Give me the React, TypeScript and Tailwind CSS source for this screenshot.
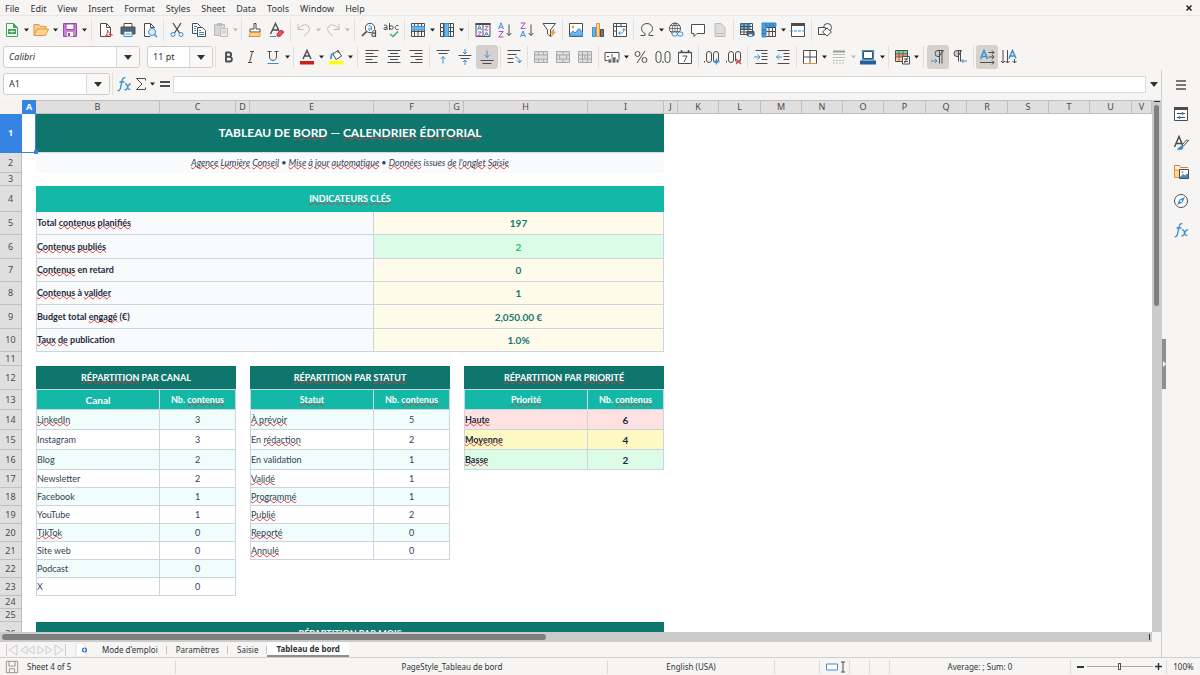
import { ReactNode } from "react";

const G = "#4d4d4d";
const B = "#3a8fd0";
const P = "#b145c4";
const L = "#bcbcbc";

const Svg = ({ children }: { children: ReactNode }) => (
  <svg className="h-4 w-4 shrink-0" viewBox="0 0 16 16" fill="none" stroke={G} strokeWidth="1">
    {children}
  </svg>
);

const gridLines = (
  <path d="M1.5 1.5h13v13h-13zM1.5 5.5h13M1.5 9.5h13M4.5 1.5v13M8 1.5v13M11.5 1.5v13" />
);

/** Icons of both toolbars and the sidebar */
const icons: Record<string, ReactNode> = {
  new: (
    <>
      <path d="M2.5 1.5h7l4 4v9h-11z" stroke="#3fa75a" fill="#fff" />
      <path d="M9.5 1.5v4h4z" fill="#3fa75a" stroke="#3fa75a" />
      <path d="M4 7h8v5H4z" fill="#3fa75a" stroke="none" />
      <path d="M5 9.500h6M8 8v3" stroke="#fff" strokeWidth=".7" />
    </>
  ),
  open: (
    <>
      <path d="M1 13V2.500h5l1.500 2H13v3" fill="#f7ce8b" stroke="#e3973d" />
      <path d="M1 13.500 4 7h11.500l-3 6.500z" fill="#fcd794" stroke="#e3973d" />
    </>
  ),
  save: (
    <>
      <path d="M1.500 1.500h13v13h-13z" fill="#c684d4" stroke="#9b45ad" />
      <path d="M4 2h8v5.500H4z" fill="#fff" stroke="#9b45ad" />
      <path d="M5 10h6v4.500H5z" fill="#fff" stroke="none" />
      <path d="M6 11h2v3H6z" fill="#9b45ad" stroke="none" />
    </>
  ),
  pdf: (
    <>
      <path d="M2.500 1.500h6l4 4v9h-10zM8.500 1.500v4h4" fill="#fff" />
      <path d="M7 14.500c2-2 3-4 2.500-6.500 1 3 3 4.500 5 5-3-.8-5 0-7.500 1.500z" stroke="#d8434e" />
    </>
  ),
  print: (
    <>
      <path d="M4 5V1.500h8V5" fill="#fff" />
      <path d="M1 5h14v7H1z" fill="#5b6166" stroke="#4d4d4d" />
      <path d="M4 9.500h8v5H4z" fill="#fff" stroke={B} />
      <path d="M5.500 12h5" stroke={B} />
    </>
  ),
  preview: (
    <>
      <path d="M12.500 6V5.500l-4-4h-6v13H8M8.500 1.500v4h4" fill="#fff" />
      <circle cx="10" cy="10" r="3.500" stroke={B} fill="#d9ecfa" />
      <path d="m12.500 12.500 2.500 2.500" stroke={B} strokeWidth="1.500" />
    </>
  ),
  cut: (
    <>
      <path d="M4 1l6.500 10M12 1 5.500 11" strokeWidth="1.300" />
      <circle cx="4" cy="12.500" r="2" stroke={B} />
      <circle cx="12" cy="12.500" r="2" stroke={B} />
    </>
  ),
  copy: (
    <>
      <path d="M1.500 1.500h5l3 3v7h-8z" fill="#fff" />
      <path d="M6.500 5.500h5l3 3v6h-8z" fill="#fff" />
      <path d="M3 4.500h3M3 6.500h2M3 8.500h2M8 8.500h2M8 10.500h5M8 12.500h5" stroke={B} />
    </>
  ),
  paste: (
    <>
      <path d="M1.500 2.500h10v11h-10z" fill="#d6d6d6" stroke={L} />
      <path d="M4 1h5v3H4z" fill={L} stroke="none" />
      <path d="M7.500 6.500h7v8h-7zM9 9h4M9 11h4" fill="#eee" stroke={L} />
    </>
  ),
  clone: (
    <>
      <path d="M7 1.500h2V7h4v3H3V7h4z" fill="#fff" />
      <path d="M3 10.500h10v4H2z" fill="#fbd28f" stroke="#e0923c" />
    </>
  ),
  clear: (
    <>
      <path d="M1.500 12 6.500 1.500 10.500 10M3.500 8h6" strokeWidth="1.400" />
      <path d="M1 14.500h6" stroke={B} />
      <path d="m8 12 4-4 3 2-4 4.500-3-.5z" fill="#e4505b" stroke="#c9303c" />
    </>
  ),
  undo: <path d="M2 2v5.500h5.500M2.500 7C5 3 9 1.500 12 4c3 3 1 6.500-4 10" stroke={L} />,
  redo: <path d="M14 2v5.500H8.500M13.500 7C11 3 7 1.500 4 4c-3 3-1 6.500 4 10" stroke={L} />,
  find: (
    <>
      <circle cx="9" cy="6" r="4.700" fill="#fff" />
      <path d="M5.500 9.500 1 14" strokeWidth="1.700" />
      <path d="M7.500 4.300c1-.7 3-.6 3 .9v3M10.500 6.200c-2-.2-3.200.2-3.200 1.200s2.200 1.200 3.200-.2" stroke={B} />
      <path d="M14.500 8v7" strokeWidth="1.200" />
      <circle cx="12.700" cy="12.700" r="1.800" fill="#f6f5f4" strokeWidth="1.200" />
    </>
  ),
  spell: (
    <>
      <path d="M1 3.500c1-.8 3-.6 3 .9v3.400M4 5.500C2 5.300.8 5.800.8 6.700S3 8.200 4 6.700M6.500 1v7M15.500 3.800c-1.800-1-3.300 0-3.300 1.700s1.500 2.800 3.300 1.800" />
      <circle cx="8.300" cy="5.500" r="1.800" />
      <path d="m7 12 3 2.500L15 9.500" stroke="#3fae5d" strokeWidth="1.400" />
    </>
  ),
  row: (
    <>
      {gridLines}
      <path d="M1.500 4.500h13v3.500h-13z" fill="#6db5ea" stroke={B} />
    </>
  ),
  col: (
    <>
      {gridLines}
      <path d="M5.500 1.500h4v13h-4z" fill="#6db5ea" stroke={B} />
    </>
  ),
  sort: (
    <>
      <path d="M1 1.500h14v13H1zM8 1.500v13" fill="#fff" />
      <path d="M.5 2h15" strokeWidth="2" />
      <path d="m2.500 8 2-4.500 2 4.500M3.200 6.700h2.600M9.500 13.800l2-4 2 4M10.200 12.600h2.600" stroke={B} />
      <path d="M2.700 10h3.600l-3.600 3.700h3.600M9.700 4.300h3.600L9.700 8h3.600" stroke={P} />
    </>
  ),
  asc: (
    <>
      <path d="M1.500 7 4 .8 6.500 7M2.300 5.200h3.400" stroke={B} />
      <path d="M1.800 9.500h4.400l-4.400 5.500h4.600" stroke={P} />
      <path d="M12 2.500v11M9.500 11l2.500 2.500 2.500-2.500" />
    </>
  ),
  desc: (
    <>
      <path d="M1.800 1h4.400L1.800 6.500h4.600" stroke={P} />
      <path d="M1.500 15.200 4 9l2.500 6.200M2.300 13.400h3.400" stroke={B} />
      <path d="M12 2.500v11M9.500 11l2.500 2.500 2.500-2.500" />
    </>
  ),
  filter: (
    <>
      <path d="M2 1.500h12.500L9.500 8v6.500L6.500 12V8z" fill="#fff" />
      <path d="M13 7 9.500 11h2l-1.500 4 4.500-5h-2z" fill="#f3a54a" stroke="#e0923c" strokeWidth=".6" />
    </>
  ),
  image: (
    <>
      <path d="M1.500 1.500h13v13h-13z" fill="#fff" />
      <path d="m2 12 3-3 2 2 4-4.500 3.500 3.500v4H2z" fill="#6db5ea" stroke={B} />
      <circle cx="5" cy="5" r="1.500" fill="#f3a54a" stroke="none" />
    </>
  ),
  chart: (
    <>
      <path d="M2.500 5.500h3v9h-3z" fill="#6db5ea" stroke={B} />
      <path d="M6.500 1.500h3v13h-3z" fill="#fbd28f" stroke="#e0923c" />
      <path d="M10.500 7.500h3v7h-3z" fill="#777" />
    </>
  ),
  pivot: (
    <>
      <path d="M1.500 1.500h13v13h-13zM4.500 1.500v13M1.500 4.500h13M1.500 9h3M9 1.500v3" fill="#fff" />
      <path d="M7 11c4 .5 5-1 5-4M10.500 8.500 12 6.500l1.500 2M8.500 9.500 6.500 11l2 2" stroke={B} />
    </>
  ),
  omega: <path d="M1.500 13.500H6v-2C3.500 10 2.500 8.500 2.500 6.500a5.500 5 0 0 1 11 0c0 2-1 3.500-3.500 5v2h4.500" />,
  link: (
    <>
      <circle cx="7" cy="6.500" r="5.500" fill="#fff" />
      <path d="M1.500 6.500h11M7 1v11M3 3.500h8M3 9.500h8M7 1C3.500 4 3.500 9 7 12M7 1c3.500 3 3.500 8 0 11" strokeWidth=".7" />
      <rect x="4" y="10" width="5.500" height="4" rx="2" stroke={B} fill="#f6f5f4" />
      <rect x="9.500" y="10" width="5.500" height="4" rx="2" stroke={B} fill="#f6f5f4" />
    </>
  ),
  comment: <path d="M1.500 2.500h13v9H7l-3 3v-3H1.500z" fill="#fff" />,
  headers: (
    <>
      <path d="M3 1.500h6l4 4v9H3z" fill="#ddd" stroke={L} />
      <path d="M4.500 11.500h7" stroke={L} />
    </>
  ),
  area: (
    <>
      <path d="M1.500 1.500h12v11h-12z" fill="#fff" />
      <path d="M2 2h9v5H2z" fill="#6db5ea" stroke={B} />
      <path d="M1.500 4.500h12M1.500 7.500h12M1.500 10h12M5 1.500v11M9 1.500v11" />
      <path d="M8 9.500h7v4H8z" fill="#5b6166" />
      <path d="M9.500 12h4v2.500h-4z" fill="#fff" stroke={B} />
    </>
  ),
  freeze: (
    <>
      {gridLines}
      <path d="M1 1h14v3.500H5V15H1z" fill="#4aa0de" stroke={B} />
      <path d="M5 1v3M9 1v3M12 1v3M1 8h4M1 11.500h4" stroke="#1f6fae" />
    </>
  ),
  split: (
    <>
      <path d="M1.500 1.500h13v13h-13z" fill="#fff" />
      <path d="M1 2.500h14" strokeWidth="3" />
      <path d="M0 9h16" stroke={B} strokeDasharray="3 1" />
    </>
  ),
  shapes: (
    <>
      <circle cx="10.500" cy="5.500" r="4" />
      <path d="M1.500 5.500h7v7h-7z" fill="#f6f5f4" />
      <path d="m10 6 4.500 4L10 14l-4.500-4z" fill="#fff" />
    </>
  ),
  bold: <path d="M5 3.500v9M4.500 3.500H8a2 2 0 0 1 0 4.300H5h3.500a2.300 2.300 0 0 1 0 4.700h-4" strokeWidth="1.900" />,
  italic: <path d="M7 2.500h4M5 13.500h4M9.500 2.500l-3 11" />,
  underline: (
    <>
      <path d="M2.500 2.500h4M9.500 2.500h4M4.500 2.500V8c0 4.500 7 4.500 7 0V2.500" />
      <path d="M2.500 14.500h11" stroke={B} />
    </>
  ),
  color: (
    <>
      <path d="M4 10 8 1.500 12 10M5.500 7h5" strokeWidth="1.500" />
      <path d="M1 12h14v3.500H1z" fill="#c9211e" stroke="none" />
    </>
  ),
  highlight: (
    <>
      <path d="m5 5 5-3.500 3.500 5.500L8 10.500z" fill="#fff" />
      <path d="M10 1v3" />
      <path d="M3 10c0-3 0-5 3-6" stroke={B} strokeWidth="1.700" />
      <path d="M1 12h14v3.500H1z" fill="#ff0" stroke="none" />
    </>
  ),
  left: <path d="M1.500 1.500h13M1.500 4.500h8M1.500 7.500h12M1.500 10.500h7M1.500 13.500h12" />,
  center: <path d="M1.500 1.500h13M4 4.500h8M2 7.500h12M4 10.500h8M1.500 13.500h13" />,
  right: <path d="M1.500 1.500h13M6.500 4.500h8M2.500 7.500h12M7.500 10.500h7M2.500 13.500h12" />,
  top: (
    <>
      <path d="M1.500 1.500h13M3.500 4.500h9" />
      <path d="M8 14.500V7.500M5.500 10 8 7.500l2.500 2.500" stroke={B} />
    </>
  ),
  middle: (
    <>
      <path d="M1.500 6.500h13M3.500 9.500h9" />
      <path d="M8 0v5M6 3l2 2 2-2M8 16v-5M6 13l2-2 2 2" stroke={B} />
    </>
  ),
  bottom: (
    <>
      <path d="M1.500 11.500h13M3.500 14.500h9" />
      <path d="M8 1.500v7M5.500 6 8 8.500 10.500 6" stroke={B} />
    </>
  ),
  wrap: (
    <>
      <path d="M1.500 1.500h13M1.500 5.500h9M1.500 9.500h6M1.500 13.500h6" />
      <path d="M9 8c3 0 4.500 2 4.500 5.500M11 11.500l2.500 2.500 2-3" stroke={B} />
    </>
  ),
  merge1: <path d="M1.500 2.500h13v11h-13zM1.500 6h13v4h-13M5.500 2.500v3.500M10.500 2.500V6M5.500 10v3.500M10.500 10v3.500" fill="#ddd" stroke="#a9a9a9" />,
  merge2: <path d="M1.500 2.500h13v11h-13zM1.500 6h13v4h-13M8 2.500V6M8 10v3.500M4.500 6v4M11.500 6v4" fill="#ddd" stroke="#a9a9a9" />,
  merge3: <path d="M1.500 2.500h13v11h-13zM1.500 6h13v4h-13M5.500 2.500v11M10.500 2.500v11M8 6v4" fill="#ddd" stroke="#a9a9a9" />,
  currency: (
    <>
      <path d="M1 3.500h14v8H1z" fill="#fff" />
      <path d="M8 5v5M3 7.500h2" />
      <path d="M4 10h4v4H4zM8 8h4v6H8zM12 10h3v4h-3z" fill="#666" stroke="#f6f5f4" strokeWidth=".7" />
    </>
  ),
  percent: (
    <>
      <circle cx="4.500" cy="5" r="2.500" />
      <circle cx="11.500" cy="11" r="2.500" />
      <path d="m12 2-8 12" />
    </>
  ),
  number: (
    <>
      <rect x="1" y="2.500" width="5" height="11" rx="2.500" />
      <rect x="10" y="2.500" width="5" height="11" rx="2.500" />
      <path d="M8 12v2" />
    </>
  ),
  date: (
    <>
      <path d="M1.500 3.500h13v11h-13z" fill="#fff" />
      <path d="M1.500 3.500h13M4.500 1v3M11.500 1v3" strokeWidth="1.500" />
      <path d="M5.500 7h4.500l-3 6" />
    </>
  ),
  addDec: (
    <>
      <path d="M.5 12v1.500" />
      <rect x="2.500" y="2.500" width="5" height="11" rx="2.500" />
      <rect x="9.500" y="2.500" width="5" height="11" rx="2.500" />
      <path d="M12.500 9.500v6M9.500 12.500h6" stroke={B} strokeWidth="1.300" />
    </>
  ),
  delDec: (
    <>
      <path d="M.5 12v1.500" />
      <rect x="2.500" y="2.500" width="5" height="11" rx="2.500" />
      <rect x="9.500" y="2.500" width="5" height="11" rx="2.500" />
      <path d="m10 10 5 5M15 10l-5 5" stroke="#e0434e" strokeWidth="1.200" />
    </>
  ),
  indent: (
    <>
      <path d="M2.500 1.500h12M8.500 4.500h6M8.500 7.500h6M8.500 10.500h6M2.500 14.500h12" />
      <path d="M1 8h5.500M4.500 5.500 7 8l-2.500 2.500" stroke={B} />
    </>
  ),
  outdent: (
    <>
      <path d="M2.500 1.500h12M8.500 4.500h6M8.500 7.500h6M8.500 10.500h6M2.500 14.500h12" />
      <path d="M7 8H1.500M4 5.500 1.500 8 4 10.500" stroke={B} />
    </>
  ),
  borders: (
    <>
      <path d="M1.500 1.500h13v13h-13zM8 1.500v13M1.500 8h13" fill="#fff" />
      <path d="M1.500 14.500h13" stroke="#e0923c" />
    </>
  ),
  lineStyle: (
    <>
      <path d="M2 2.500h12" stroke="#999" strokeWidth="2" />
      <path d="M2 5.500h12M2 8.500h12" stroke={L} />
      <path d="M2 11.500h12M2 14h12" stroke={L} strokeDasharray="2 1" />
    </>
  ),
  lineColor: (
    <>
      <path d="M2.500 1.500h11v9h-11z" fill="#fff" stroke={B} strokeWidth="1.200" />
      <path d="M3.500 2.500h9v7h-9z" />
      <path d="M0 11.500h16v4H0z" fill="#1f5f9e" stroke="none" />
    </>
  ),
  conditional: (
    <>
      <path d="M1.500 1.500h12v11h-12z" fill="#fff" />
      <path d="M2 2h11v3H2z" fill="#7fd494" stroke="none" />
      <path d="M2 5h11v3H2z" fill="#ef8b8b" stroke="none" />
      <path d="M2 8h6v4H2z" fill="#fbd28f" stroke="none" />
      <path d="M1.500 4.800h12M1.500 8h12M5 1.500v11M9 1.500v11" strokeWidth=".7" />
      <path d="M8.500 7.500h7v7.500h-7zM10 10h4M10 12.500h4M13.500 8.500 10.500 14" fill="#fff" />
    </>
  ),
  ltr: (
    <>
      <path d="M13.500 1.500H8a3 3 0 0 0 0 6h1zM9.500 1.500v13M12 1.500v13" fill="#ccc" />
      <path d="M1 12h6M5 10l2 2-2 2" stroke={B} />
    </>
  ),
  rtl: (
    <>
      <path d="M9.500 1.500H5a3 3 0 0 0 0 6h1zM6.500 1.500v11M8.500 1.500v11" fill="#ccc" />
      <path d="M15 12H9.500M11.500 10l-2 2 2 2" stroke={B} />
    </>
  ),
  horizontal: (
    <>
      <path d="M1.500 10 5 1.500 8.500 10M3 7.500h4" stroke={B} strokeWidth="1.500" />
      <path d="M9.500 3.500H15M9.500 8H15M1 13.500h14M13 1.500l2 2-2 2M13 6l2 2-2 2M13 11.500l2 2-2 2" />
    </>
  ),
  vertical: (
    <>
      <path d="M8 9.500 11.500 1.500 15 9.500M9.500 7h4" stroke={B} strokeWidth="1.500" />
      <path d="M2 1v13M6.500 1v13M13.500 10v4M0 12l2 2 2-2M4.500 12l2 2 2-2M11.500 12l2 2 2-2" />
    </>
  ),
  menu: <path d="M3 4h10M3 8h10M3 12h10" strokeWidth="1.600" />,
  properties: (
    <>
      <path d="M1.500 1.500h13v13h-13z" fill="#fff" />
      <path d="M1 2.500h14" strokeWidth="3" />
      <path d="M4 7.500h8M4 11.500h8" />
      <path d="M9.500 6v3M6.500 10v3" stroke={B} strokeWidth="1.500" />
    </>
  ),
  styles: (
    <>
      <path d="M1.500 12 6 1.500 10 11M3 8.500h6" strokeWidth="1.500" />
      <path d="M15.500 5.500 10.500 11l-1.500-1 4.500-5z" fill="#fff" />
      <path d="M9.500 11c-2-.5-2.500 2-5 3 3 1.500 6.500 0 5-3z" fill={B} stroke={B} />
    </>
  ),
  gallery: (
    <>
      <path d="M1.500 13V1.500h5l1 2H15" stroke="#e07b3c" />
      <path d="M1.500 13.500V6H13v7.500z" fill="#fcd794" stroke="#e0923c" />
      <path d="M6.500 5.500h9v9h-9z" fill="#fff" />
      <path d="m7 13 3-3 2 1.500 2-2 1 1v3.500H7z" fill={B} stroke="none" />
      <circle cx="9.500" cy="8" r="1" fill="#e0923c" stroke="none" />
    </>
  ),
  navigator: (
    <>
      <circle cx="8" cy="8" r="6.500" fill="#fff" />
      <path d="M12 4 9.500 9.500 4 12l2.500-5.500z" fill={B} stroke="none" />
      <circle cx="8" cy="8" r="1" fill="#fff" stroke="none" />
    </>
  ),
  sigma: <path d="M12.500 4.500v-2h-9L9 8l-5.500 5.500h9v-2" />,
  equals: <path d="M3 6h10M3 10h10" strokeWidth="1.800" />,
  fx: (
    <>
      <path d="M9.500 2C7.500 1 6.500 2.500 6 5L4.500 12c-.5 2-1.500 3-3 2.500M3.500 6h5" stroke={B} strokeWidth="1.300" />
      <path d="M9 8c2-.5 2 1 2.500 3s1 3 3 2M15 8c-2-.5-3 2-3.500 3.500S9.500 14.500 8.500 13.500" stroke={B} strokeWidth="1.300" />
    </>
  ),
};

const Tool = ({ name, pressed }: { name: string; pressed?: boolean }) => (
  <button
    aria-label={name}
    className={
      pressed
        ? "flex h-6 w-[22px] shrink-0 items-center justify-center rounded-[3px] bg-[#d5d2ce]"
        : "flex h-6 w-[22px] shrink-0 items-center justify-center"
    }
  >
    <Svg>{icons[name]}</Svg>
  </button>
);

const Caret = ({ off }: { off?: boolean }) => (
  <button aria-label="More" className="flex h-6 w-[7px] shrink-0 items-center justify-center">
    <svg className="h-1 w-[5px]" viewBox="0 0 5 3">
      <path d="M0 0h5L2.500 3z" fill={off ? "#bbb" : "#222"} />
    </svg>
  </button>
);

const Sep = ({ wide }: { wide?: boolean }) => (
  <div className={wide ? "flex w-[7px] shrink-0 justify-center" : "flex w-[5px] shrink-0 justify-center"}>
    <div className="h-[22px] w-px bg-[#e2e0de]" />
  </div>
);

/** "|" is a separator, "||" a wide one, "v" a caret, "-" a greyed caret, "!" marks a pressed button */
const Tools = ({ items }: { items: string }) => (
  <>
    {items.split(" ").map((item, i) => {
      if (item === "|") return <Sep key={i} />;
      if (item === "||") return <Sep key={i} wide />;
      if (item === "v") return <Caret key={i} />;
      if (item === "-") return <Caret key={i} off />;
      return <Tool key={i} name={item.replace("!", "")} pressed={item.startsWith("!")} />;
    })}
  </>
);

type ComboProps = { label: string; value: string; size: string; look?: string };

const Combo = ({ label, value, size, look = "" }: ComboProps) => (
  <div className={`flex h-[22px] shrink-0 overflow-hidden rounded-[3px] border border-[#d0cdca] bg-white ${size}`}>
    <input
      aria-label={label}
      defaultValue={value}
      className={`min-w-0 flex-1 bg-transparent px-[5px] text-[9px] text-[#2e3436] outline-none ${look}`}
    />
    <button
      aria-label={`Open ${label}`}
      className="flex w-[23px] items-center justify-center border-l border-[#d9d6d3] bg-[#f9f8f7]"
    >
      <svg className="h-[5px] w-2" viewBox="0 0 8 5">
        <path d="M0 0h8L4 5z" fill="#2e3436" />
      </svg>
    </button>
  </div>
);

/** Cell text; words between asterisks are flagged by the spell checker */
const Words = ({ children }: { children: string }) => (
  <>
    {children.split("*").map((part, i) =>
      i % 2 ? (
        <span key={i} className="underline decoration-[#d83a3a] decoration-wavy decoration-1 [text-decoration-skip-ink:none] [text-underline-offset:-1px]">
          {part}
        </span>
      ) : (
        part
      )
    )}
  </>
);

const columns = ["B", "C", "D", "E", "F", "G", "H", "I", "J", "K", "L", "M", "N", "O", "P", "Q", "R", "S", "T", "U", "V"];

const indicators = [
  { label: "Total *contenus* *planifiés*", value: "197" },
  { label: "*Contenus* *publiés*", value: "2", good: true },
  { label: "*Contenus* en retard", value: "0" },
  { label: "*Contenus* à *valider*", value: "1" },
  { label: "Budget total *engagé* (€)", value: "2,050.00 €" },
  { label: "*Taux* *de* publication", value: "1.0%" },
];

const channels = [
  ["*LinkedIn*", "3"],
  ["Instagram", "3"],
  ["Blog", "2"],
  ["Newsletter", "2"],
  ["Facebook", "1"],
  ["YouTube", "1"],
  ["*TikTok*", "0"],
  ["Site web", "0"],
  ["Podcast", "0"],
  ["X", "0"],
];

const statuses = [
  ["*À prévoir*", "5"],
  ["En *rédaction*", "2"],
  ["En validation", "1"],
  ["*Validé*", "1"],
  ["*Programmé*", "1"],
  ["*Publié*", "2"],
  ["*Reporté*", "0"],
  ["*Annulé*", "0"],
];

const priorities = [
  ["*Haute*", "6", "bg-[#fee2e2]"],
  ["*Moyenne*", "4", "bg-[#fef9c3]"],
  ["*Basse*", "2", "bg-[#dcfce7]"],
];

type RowProps = { n: number; h: string; active?: boolean; children?: ReactNode };

const Row = ({ n, h, active, children }: RowProps) => (
  <tr className={h}>
    <th
      scope="row"
      className={
        active
          ? "border-r border-b border-[#3584e4] bg-[#3584e4] font-bold text-white"
          : "border-r border-b border-[#c0bfbe] bg-[#dfdfdf] font-normal text-[#4a4a4a]"
      }
    >
      <span className="font-['Noto_Sans',sans-serif] text-[9px]">{n}</span>
    </th>
    {children}
  </tr>
);

const line = "border-r border-b border-[#cbd5e1]";

const Pair = ({ cells, odd }: { cells?: string[]; odd: boolean }) => {
  if (!cells) return <td colSpan={2} />;
  const bg = odd ? "bg-white" : "bg-[#f0fdfa]";
  return (
    <>
      <td className={`border-l ${line} ${bg} text-left`}>
        <Words>{cells[0]}</Words>
      </td>
      <td className={`${line} ${bg}`}>{cells[1]}</td>
    </>
  );
};

const Sheet = () => (
  <table className="w-full table-fixed border-separate border-spacing-0 text-center font-[Lato,sans-serif] text-[9px] leading-3 whitespace-nowrap text-[#334155] [&_td]:overflow-hidden">
    <colgroup>
      <col className="w-[22px]" />
      <col className="w-[14px]" />
      {[0, 1, 2].map((i) => [
        <col key={`a${i}`} className="w-[124px]" />,
        <col key={`b${i}`} className="w-[76px]" />,
        <col key={`c${i}`} className="w-[14px]" />,
      ])}
      {columns.slice(9, 20).map((c) => (
        <col key={c} className={"LPU".includes(c) ? "w-[42px]" : "w-[41px]"} />
      ))}
      <col />
    </colgroup>
    <thead className="font-['Noto_Sans',sans-serif] text-[#4a4a4a]">
      <tr className="h-[14px]">
        <td className="bg-[#f4f3f2]" />
        <th scope="col" className="bg-[#3584e4] font-bold text-white">
          A
        </th>
        {columns.map((c) => (
          <th key={c} scope="col" className="overflow-hidden border-t border-r border-b border-[#c0bfbe] bg-[#dfdfdf] font-normal">
            {c}
          </th>
        ))}
      </tr>
    </thead>
    <tbody>
      <Row n={1} h="h-[39px]" active>
        <td className="border-r border-b border-[#3584e4] bg-white" />
        <td colSpan={8} className="border-b border-[#cfe0de] bg-[#0f766e] text-[12px] font-bold text-white">
          <Words>TABLEAU DE *BORD* — *CALENDRIER* *ÉDITORIAL*</Words>
        </td>
      </Row>
      <Row n={2} h="h-5">
        <td />
        <td colSpan={8} className="bg-[#f8fafc] text-[9px] italic">
          <Words>*Agence* *Lumière* *Conseil* • *Mise* *à* *jour* *automatique* • *Données* issues *de* *l'onglet* *Saisie*</Words>
        </td>
      </Row>
      <Row n={3} h="h-[13px]" />
      <Row n={4} h="h-[26px]">
        <td />
        <td colSpan={8} className="bg-[#14b8a6] font-bold text-white">
          <Words>*INDICATEURS* *CLÉS*</Words>
        </td>
      </Row>
      {indicators.map(({ label, value, good }, i) => (
        <Row key={label} n={i + 5} h={i === 1 || i === 4 ? "h-6" : "h-[23px]"}>
          <td />
          <td colSpan={4} className={`border-l ${line} bg-[#f8fafc] text-left font-bold text-[#1e293b]`}>
            <Words>{label}</Words>
          </td>
          <td
            colSpan={4}
            className={`${line} text-[10px] font-bold ${good ? "bg-[#dcfce7] text-[#22c55e]" : "bg-[#fffbeb] text-[#0f766e]"}`}
          >
            {value}
          </td>
        </Row>
      ))}
      <Row n={11} h="h-[14px]" />
      <Row n={12} h="h-6">
        {["*RÉPARTITION* PAR CANAL", "*RÉPARTITION* PAR *STATUT*", "*RÉPARTITION* PAR *PRIORITÉ*"].map((t) => [
          <td key={`${t}-gap`} />,
          <td key={t} colSpan={2} className="border-b border-[#cbd5e1] bg-[#0f766e] font-bold text-white">
            <Words>{t}</Words>
          </td>,
        ])}
      </Row>
      <Row n={13} h="h-5">
        {["Canal", "*Statut*", "*Priorité*"].map((t) => [
          <td key={`${t}-gap`} />,
          <td
            key={t}
            className={`border-l ${line} bg-[#14b8a6] font-bold text-white ${t === "Canal" ? "text-[10px]" : ""}`}
          >
            <Words>{t}</Words>
          </td>,
          <td key={`${t}-count`} className={`${line} bg-[#14b8a6] font-bold text-white`}>
            <Words>Nb. *contenus*</Words>
          </td>,
        ])}
      </Row>
      {channels.map((channel, i) => (
        <Row key={channel[0]} n={i + 14} h={i < 3 ? "h-5" : "h-[18px]"}>
          <td />
          <Pair cells={channel} odd={i % 2 === 1} />
          <td />
          <Pair cells={statuses[i]} odd={i % 2 === 1} />
          <td />
          {priorities[i] && (
            <>
              <td className={`border-l ${line} ${priorities[i][2]} text-left font-bold text-[#1e293b]`}>
                <Words>{priorities[i][0]}</Words>
              </td>
              <td className={`${line} ${priorities[i][2]} text-[10px] font-bold text-[#1e293b]`}>{priorities[i][1]}</td>
            </>
          )}
        </Row>
      ))}
      <Row n={24} h="h-[13px]" />
      <Row n={25} h="h-[13px]" />
      <Row n={26} h="h-6">
        <td />
        <td colSpan={8} className="bg-[#0f766e] font-bold text-white">
          <Words>*RÉPARTITION* PAR MOIS</Words>
        </td>
      </Row>
    </tbody>
  </table>
);

const menus = ["File", "Edit", "View", "Insert", "Format", "Styles", "Sheet", "Data", "Tools", "Window", "Help"];

const App = () => {
  return (
    <div className="flex h-screen flex-col overflow-hidden bg-[#f6f5f4] font-['Noto_Sans',sans-serif] text-[9px] leading-3 text-[#2e3436]">
      <nav className="flex h-4 shrink-0 items-end gap-px border-b border-[#e9e7e5]">
        {menus.map((m) => (
          <button key={m} className="px-[5px]">
            {m}
          </button>
        ))}
        <button aria-label="Close" className="mr-2 mb-1 ml-auto">
          <svg className="h-[6px] w-[6px]" viewBox="0 0 6 6">
            <path d="m.5.5 5 5m0-5-5 5" stroke="#222" strokeWidth="1.500" />
          </svg>
        </button>
      </nav>

      {/**Standard toolbar */}
      <div className="flex h-[28px] shrink-0 items-center pl-px">
        <Tools items="new v open v save v || pdf print preview | cut copy paste - | clone clear | undo - redo - || find spell | row v col v || sort asc desc filter | image chart pivot | omega v link comment headers | area freeze v split | shapes" />
      </div>

      {/**Formatting toolbar */}
      <div className="flex h-[26px] shrink-0 items-center pl-[3px]">
        <Combo label="Font name" value="Calibri" size="mr-[7px] w-[137px]" look="italic" />
        <Combo label="Font size" value="11 pt" size="w-[66px]" />
        <Tools items="| bold italic underline v | color v highlight v || left center right | top middle !bottom | wrap | merge1 merge2 merge3 | currency v percent number date | addDec delDec | indent outdent | borders v lineStyle - lineColor v | conditional v || !ltr rtl | !horizontal vertical" />
      </div>

      <div className="flex min-h-0 flex-1">
        <main className="flex min-w-0 flex-1 flex-col">
          <div className="flex h-[30px] shrink-0 items-center pb-[2px] pl-[3px]">
            <Combo label="Name box" value="A1" size="w-[107px]" />
            <Sep />
            <button aria-label="Function wizard" className="flex w-[18px] justify-center">
              <Svg>{icons.fx}</Svg>
            </button>
            <button aria-label="Select function" className="flex w-4 justify-center">
              <Svg>{icons.sigma}</Svg>
            </button>
            <Caret />
            <button aria-label="Formula" className="flex w-[17px] justify-center">
              <Svg>{icons.equals}</Svg>
            </button>
            <input aria-label="Formula input" className="h-[17px] min-w-0 flex-1 border border-[#dcdad8] bg-white px-1 outline-none" />
            <button aria-label="Expand formula bar" className="flex w-[15px] justify-center">
              <svg className="h-[5px] w-2" viewBox="0 0 8 5">
                <path d="M0 0h8L4 5z" fill="#2e3436" />
              </svg>
            </button>
          </div>

          <div className="flex min-h-0 flex-1">
            <div className="relative min-w-0 flex-1 overflow-hidden bg-white">
              <Sheet />
              <div className="absolute top-[50px] left-[34px] h-1 w-1 bg-[#3584e4]" />
            </div>
            <div className="flex w-[9px] shrink-0 flex-col items-center bg-[#cbcbcb] pt-px">
              <div className="h-px w-[6px] bg-[#333]" />
              <div className="mt-[3px] h-[201px] w-[5px] rounded-full bg-[#7f7f7f]" />
            </div>
          </div>

          <div className="mr-[9px] flex h-[10px] shrink-0 items-center justify-between bg-[#cbcbcb] pr-[2px] pl-[2px]">
            <div className="h-[6px] w-[544px] rounded-full bg-[#7f7f7f]" />
            <div className="h-[6px] w-px bg-[#333]" />
          </div>

          <div className="flex h-[15px] shrink-0 items-center text-[8px]">
            <svg className="mx-[6px] h-3 w-[60px]" viewBox="0 0 60 12" fill="none" stroke="#cdcdcd">
              <path d="M.5 0v12M11 1 3 6l8 5zM21 2l-6 4 6 4zM28 2l-6 4 6 4zM32 2l6 4-6 4zM40 2l6 4-6 4zM49 1l8 5-8 5zM59.500 0v12" />
            </svg>
            <button aria-label="Add sheet" className="mr-[3px] ml-[3px] flex h-[14px] w-[15px] items-center justify-end">
              <svg className="h-[14px] w-[15px]" viewBox="0 0 15 14">
                <path d="M1 0h7l3 3v11H1z" fill="#fff" stroke="#ddd" />
                <circle cx="9.500" cy="7" r="2.500" fill="#2a6fb5" />
                <path d="M9.500 5.500v3M8 7h3" stroke="#fff" />
              </svg>
            </button>
            {["Mode d'emploi", "Paramètres", "Saisie"].map((tab) => (
              <button key={tab} className="relative px-[9px] after:absolute after:top-[2px] after:right-0 after:h-2 after:w-px after:bg-[#c4c2c0]">
                {tab}
              </button>
            ))}
            <button className="h-[15px] border-b-2 border-[#8c8f8c] bg-white px-[9px] font-bold">Tableau de bord</button>
          </div>
        </main>

        <aside className="relative flex w-[39px] shrink-0 flex-col items-center gap-[5px] border-l border-[#d0cecc] pt-[3px]">
          {["menu", "properties", "styles", "gallery", "navigator", "fx"].map((name) => (
            <Tool key={name} name={name} />
          ))}
          <button aria-label="Hide sidebar" className="absolute top-[269px] left-0 flex h-[50px] w-1 items-center justify-center bg-[#8f8f8f]">
            <svg className="h-[6px] w-[3px]" viewBox="0 0 3 6">
              <path d="M0 0v6l3-3z" fill="#fff" />
            </svg>
          </button>
        </aside>
      </div>

      <footer className="flex h-[18px] shrink-0 items-center border-t border-[#d0cecc] text-[8px] [&>div]:flex [&>div]:h-[14px] [&>div]:items-center [&>div]:border-[#dddbd9]">
        <div className="w-[176px] gap-2 border-r pl-[5px]">
          <svg className="h-[14px] w-[14px]" viewBox="0 0 16 16" fill="none" stroke="#8a8a8a">
            <path d="M1.500 1.500h13v13h-13zM4.500 1.500V7h7V1.500M5 14.500V10h6v4.500" />
          </svg>
          Sheet 4 of 5
        </div>
        <div className="w-[432px] justify-center border-r pl-[121px]">PageStyle_Tableau de bord</div>
        <div className="w-[167px] justify-center border-r">English (USA)</div>
        <div className="flex-1 border-r" />
        <div className="w-[30px] justify-end border-r pr-[3px]">
          <svg className="h-3 w-5" viewBox="0 0 20 12" fill="none">
            <path d="M.5 3h11v6H.5z" stroke={B} fill="#fff" />
            <path d="M15 1h4M15 11h4M17 1v10" stroke={G} />
          </svg>
        </div>
        <div className="w-5 border-r" />
        <div className="w-5 border-r" />
        <div className="w-[181px] justify-center border-r">Average: ; Sum: 0</div>
        <div className="w-24 justify-between border-r pr-1 pl-[6px]">
          <button aria-label="Zoom out" className="h-[2px] w-[7px] bg-[#2e3436]" />
          <label className="flex">
            <input
              type="range"
              aria-label="Zoom"
              className="h-2 w-[66px] appearance-none bg-[linear-gradient(#aaa,#aaa)] bg-[length:100%_1px] bg-center bg-no-repeat [&::-webkit-slider-thumb]:h-[7px] [&::-webkit-slider-thumb]:w-[3px] [&::-webkit-slider-thumb]:appearance-none [&::-webkit-slider-thumb]:border [&::-webkit-slider-thumb]:border-[#555] [&::-webkit-slider-thumb]:bg-white"
            />
          </label>
          <button aria-label="Zoom in">
            <svg className="h-[7px] w-[7px]" viewBox="0 0 7 7">
              <path d="M0 3.500h7M3.500 0v7" stroke="#2e3436" strokeWidth="1.500" />
            </svg>
          </button>
        </div>
        <div className="w-[33px] justify-center">100%</div>
      </footer>
    </div>
  );
};

export default App;
